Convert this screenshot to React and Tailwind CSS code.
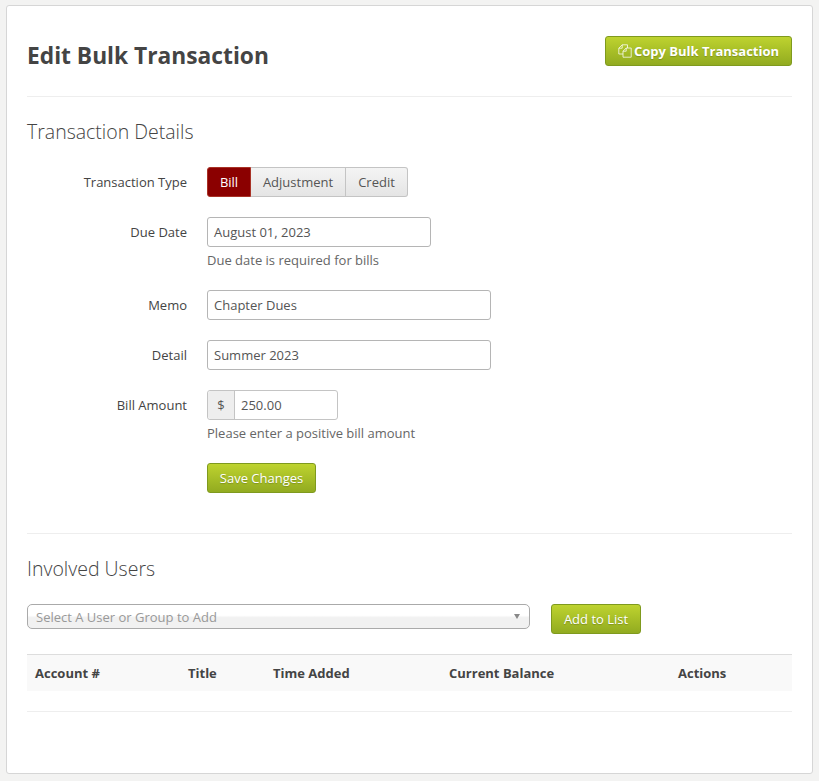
import React from 'react';

const FONT = "font-['Open_Sans',sans-serif]";
const GREEN = 'border border-[#7f9a1e] rounded-[3px] bg-gradient-to-b from-[#bed32f] to-[#92ab20] text-white pt-[2px] [text-shadow:0_1px_1px_rgba(0,0,0,0.2)]';
const INPUT = 'h-[30px] border border-[#b5b5b5] rounded-[3px] bg-white text-[13px] text-[#555] flex items-center px-[6px] pt-[2px]';
const SEGMENT = 'flex items-center justify-center pt-[2px] border-y border-r border-[#c4c4c4] bg-gradient-to-b from-[#f4f4f4] to-[#e5e5e5]';

const CopyIcon = () => (
    <svg width="14" height="14" viewBox="0 0 14 14" fill="none" stroke="#fff" strokeOpacity="0.75" strokeWidth="1" className="-mt-[2px]">
        <path d="M9.5 4V0.8H4.2L0.8 4.2V10H5" />
        <path d="M4.2 0.8V4.2H0.8" />
        <path d="M5 7.2L8.2 4H13.2V13.2H5Z" />
        <path d="M8.2 4V7.2H5" />
    </svg>
);

const Row = ({ label, children, className = '' }) => (
    <div className={`flex ${className}`}>
        <div className="w-[160px] h-[30px] pt-[2px] flex items-center justify-end text-[13px] text-[#444]">{label}</div>
        <div className="ml-[20px]">{children}</div>
    </div>
);

const Help = ({ children }) => <p className="mt-[4px] h-[18px] leading-[18px] text-[13px] text-[#666]">{children}</p>;

const COLUMNS = [
    { label: 'Account #', width: 'w-[153px]' },
    { label: 'Title', width: 'w-[85px]' },
    { label: 'Time Added', width: 'w-[176px]' },
    { label: 'Current Balance', width: 'w-[229px]' },
    { label: 'Actions', width: 'flex-1' },
];

export default function App() {
    return (
        <div className={`${FONT} min-h-[781px] bg-[#f3f3f2] pt-[5px] px-[6px]`}>
            <div className="h-[769px] border border-[#d6d6d6] rounded-[3px] bg-white px-[20px]">
                {/* Header */}
                <div className="flex justify-between h-[91px] border-b border-[#eeeeee]">
                    <h1 className="mt-[34px] h-[32px] leading-[32px] text-[22.75px] font-bold text-[#444]">Edit Bulk Transaction</h1>
                    <button className={`${GREEN} mt-[30px] h-[30px] w-[187px] flex items-center justify-center gap-[2px] text-[13px] font-bold`}>
                        <CopyIcon />
                        Copy Bulk Transaction
                    </button>
                </div>

                {/* Transaction details */}
                <h2 className="mt-[21px] h-[28px] leading-[28px] text-[19.5px] font-light text-[#444]">Transaction Details</h2>
                <Row label="Transaction Type" className="mt-[21px]">
                    <div className="flex h-[30px] text-[13px] text-[#555]">
                        <div className="w-[44px] pt-[2px] flex items-center justify-center rounded-l-[3px] border border-[#a83226] bg-[#8b0000] text-white">Bill</div>
                        <div className={`${SEGMENT} w-[95px]`}>Adjustment</div>
                        <div className={`${SEGMENT} w-[62px] rounded-r-[3px]`}>Credit</div>
                    </div>
                </Row>
                <Row label="Due Date" className="mt-[20px]">
                    <div className={`${INPUT} w-[224px]`}>August 01, 2023</div>
                    <Help>Due date is required for bills</Help>
                </Row>
                <Row label="Memo" className="mt-[21px]">
                    <div className={`${INPUT} w-[284px]`}>Chapter Dues</div>
                </Row>
                <Row label="Detail" className="mt-[20px]">
                    <div className={`${INPUT} w-[284px]`}>Summer 2023</div>
                </Row>
                <Row label="Bill Amount" className="mt-[20px]">
                    <div className="flex h-[30px] w-[131px] border border-[#c4c4c4] rounded-[3px] text-[13px] text-[#555]">
                        <div className="w-[27px] pt-[2px] flex items-center justify-center border-r border-[#c4c4c4] bg-[#eeeeee] rounded-l-[3px]">$</div>
                        <div className="flex-1 pt-[2px] flex items-center px-[6px]">250.00</div>
                    </div>
                    <Help>Please enter a positive bill amount</Help>
                    <button className={`${GREEN} mt-[21px] h-[30px] w-[109px] text-[13px]`}>Save Changes</button>
                </Row>

                <div className="mt-[40px] border-t border-[#eeeeee]" />

                {/* Involved users */}
                <h2 className="mt-[21px] h-[28px] leading-[28px] text-[19.5px] font-light text-[#444]">Involved Users</h2>
                <div className="mt-[21px] flex items-start">
                    <div className="relative w-[503px] h-[25px] pt-[2px] border border-[#aaaaaa] rounded-[5px] bg-gradient-to-b from-white from-45% to-[#f1f1f1] to-55% flex items-center pl-[8px] text-[13px] text-[#999]">
                        Select A User or Group to Add
                        <span className="absolute right-[9px] top-[9px] w-0 h-0 border-x-[3.5px] border-x-transparent border-t-[5px] border-t-[#888]" />
                    </div>
                    <button className={`${GREEN} ml-[21px] h-[30px] w-[90px] text-[13px]`}>Add to List</button>
                </div>

                {/* Table */}
                <div className="mt-[20px] h-[37px] pt-[2px] flex items-center border-t border-[#dddddd] bg-[#f9f9f9] pl-[8px] text-[13px] font-bold text-[#444]">
                    {COLUMNS.map((col) => (
                        <div key={col.label} className={col.width}>{col.label}</div>
                    ))}
                </div>
                <div className="mt-[20px] border-t border-[#eeeeee]" />
            </div>
        </div>
    );
}
